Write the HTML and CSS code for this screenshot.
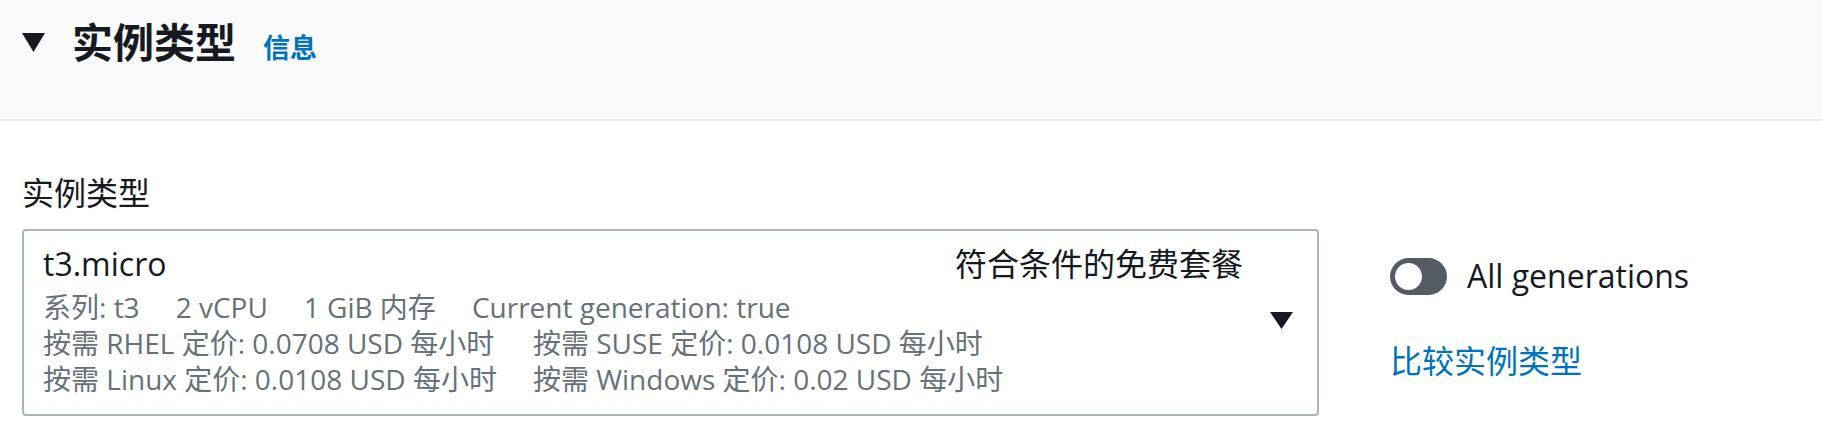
FILE: index.html
```html
<!DOCTYPE html>
<html lang="zh-CN">
<head>
  <meta charset="utf-8">
  <title>实例类型</title>
  <meta name="viewport" content="width=device-width, initial-scale=1">
  <link rel="stylesheet" href="styles.css">
</head>
<body>
  <section class="panel">
    <header>
      <svg class="caret" width="23" height="19" viewBox="0 0 23 19"><path d="M0 0h23L11.5 19z"/></svg>
      <h2>实例类型<a class="info" href="#">信息</a></h2>
    </header>
    <div class="content">
      <label class="label">实例类型</label>
      <div class="row">
        <div class="select">
          <div class="option">
            <div class="top">
              <span class="name">t3.micro</span>
              <span class="tag">符合条件的免费套餐</span>
            </div>
            <div class="specs">
              <span>系列: t3</span>
              <span>2 vCPU</span>
              <span>1 GiB 内存</span>
              <span>Current generation: true</span>
            </div>
            <div class="prices">
              <span>按需 RHEL 定价: 0.0708 USD 每小时</span>
              <span>按需 SUSE 定价: 0.0108 USD 每小时</span>
              <span>按需 Linux 定价: 0.0108 USD 每小时</span>
              <span>按需 Windows 定价: 0.02 USD 每小时</span>
            </div>
          </div>
          <svg class="arrow" width="23" height="17" viewBox="0 0 23 17"><path d="M0 0h23L11.5 17z"/></svg>
        </div>
        <div class="side">
          <div class="switch"><span class="toggle"></span>All generations</div>
          <a class="compare" href="#">比较实例类型</a>
        </div>
      </div>
    </div>
  </section>
</body>
</html>
```

FILE: styles.css
```css
*, *:before, *:after {
  box-sizing: border-box;
}
html, body {
  margin: 0;
  padding: 0;
  background: #fff;
  color: #16191f;
  font-family: "Open Sans", "Noto Sans CJK SC", sans-serif;
  overflow: hidden;
}
header {
  display: flex;
  align-items: flex-start;
  height: 121px;
  padding: 17px 22px 0;
  background: #fafafa;
  border-bottom: 2px solid #eaeded;
}
header .caret {
  fill: #16191f;
  margin-top: 16px;
  margin-right: 27px;
}
header h2 {
  margin: 0;
  font-size: 41px;
  line-height: 50px;
  font-weight: 700;
}
.info {
  margin-left: 27px;
  font-size: 27px;
  font-weight: 700;
  color: #0073bb;
  text-decoration: none;
}
.content {
  padding: 52px 22px 0;
}
.label {
  display: block;
  font-size: 32px;
  line-height: 40px;
  margin-bottom: 16px;
}
.row {
  display: flex;
  align-items: flex-start;
}
.select {
  display: flex;
  align-items: center;
  width: 1297px;
  padding: 13px 24px 17px 19px;
  border: 2px solid #aab7b8;
  border-radius: 4px;
}
.option {
  flex-grow: 1;
}
.top {
  display: flex;
  justify-content: space-between;
  font-size: 32px;
  line-height: 40px;
  margin-bottom: 5px;
}
.specs, .prices {
  font-size: 28px;
  line-height: 36px;
  color: #687078;
}
.specs {
  display: flex;
  column-gap: 36px;
}
.prices {
  display: grid;
  grid-template-columns: auto auto;
  justify-content: start;
  column-gap: 36px;
}
.arrow {
  fill: #16191f;
  margin-left: 27px;
}
.side {
  margin-left: 71px;
  padding-top: 27px;
}
.switch {
  display: flex;
  align-items: center;
  gap: 20px;
  font-size: 32px;
  line-height: 40px;
}
.toggle {
  position: relative;
  width: 57px;
  height: 37px;
  border-radius: 19px;
  background: #545b64;
}
.toggle:after {
  content: "";
  position: absolute;
  top: 5px;
  left: 5px;
  width: 27px;
  height: 27px;
  border-radius: 50%;
  background: #fff;
}
.compare {
  display: block;
  margin-top: 45px;
  font-size: 32px;
  line-height: 40px;
  color: #0073bb;
  text-decoration: none;
}
```
